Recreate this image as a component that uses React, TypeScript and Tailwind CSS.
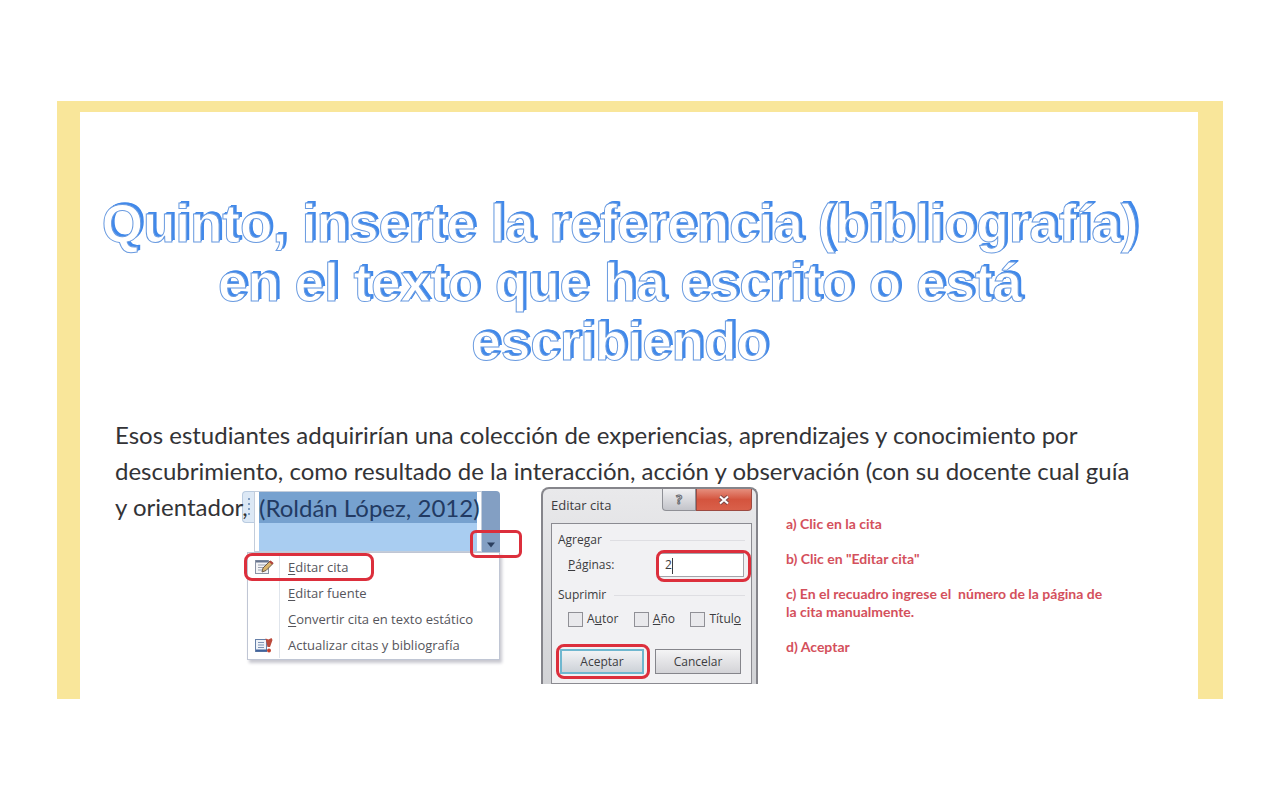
import React from 'react';

const MENU_ITEMS = [
  { key: 'E', rest: 'ditar cita', icon: 'edit' },
  { key: 'E', rest: 'ditar fuente', icon: '' },
  { key: 'C', rest: 'onvertir cita en texto estático', icon: '' },
  { key: '', rest: 'Actualizar citas y bibliografía', icon: 'update' },
];

const EditIcon = () => (
  <svg viewBox="0 0 20 16" className="w-5 h-4">
    <rect x="1.5" y="1.5" width="13" height="13" fill="#f4f4f6" stroke="#8a93a5" />
    <path d="M2 2.5h12" stroke="#66748f" strokeWidth="2" />
    <path d="M4 6h8M4 8.5h6M4 11h5" stroke="#9aa2b1" />
    <path d="M8 13l1-4 7-7 3 2.5-7 7z" fill="#d9b56c" stroke="#6b5a48" />
    <path d="M15 3l1.5-1.5L19.5 4 18 5.5z" fill="#b5443c" />
  </svg>
);

const UpdateIcon = () => (
  <svg viewBox="0 0 20 16" className="w-5 h-4">
    <rect x="1.5" y="2.5" width="11" height="12" fill="#eef2f8" stroke="#6680a8" />
    <path d="M2 13.5h11" stroke="#40639c" strokeWidth="2" />
    <path d="M4 5.5h6M4 8h6M4 10.5h6" stroke="#7f93b5" />
    <path d="M11.5 1.5l3 1 3-1.5 1 2-2.500 7h-2.500z" fill="#bb4a3c" />
    <circle cx="15" cy="13.5" r="2" fill="#c2412f" />
  </svg>
);

const CitationControl = () => (
  <div className="w-[258px] shrink-0 mt-0.5">
    <div className="relative z-10 flex h-[61px]">
      <div className="w-3 h-8 rounded-l border border-r-0 border-[#b9cbe0] bg-[#dce8f5] flex justify-center items-center">
        <svg viewBox="0 0 4 20" className="w-1 h-5">
          <path d="M2 1v18" stroke="#7f9dc2" strokeWidth="2" strokeDasharray="2 3" />
        </svg>
      </div>
      <div className="flex-1 min-w-0 border border-[#c3cddb] bg-white px-1">
        <div className="h-full bg-[#a9cdf1]">
          <div className="h-[31px] bg-[#76a1cf] text-2xl leading-[31px] text-[#223a62] whitespace-nowrap">
            (Roldán López, 2012)
          </div>
        </div>
      </div>
      <button aria-label="Opciones de cita" className="w-[18px] rounded-tr bg-[#839fc3] flex items-end justify-center pb-1">
        <svg viewBox="0 0 10 6" className="w-2.5 h-1.5">
          <path d="M1 0.5h8L5 5.5z" fill="#2c405f" />
        </svg>
      </button>
      <span className="absolute -right-[22px] -bottom-1.5 w-[52px] h-7 rounded-md border-3 border-[#dc2f3c]" />
    </div>
    <div className="relative ml-[5px] py-px bg-white border border-[#c0c6d4] shadow-[2px_3px_3px_#c8c8d0] font-['Open_Sans',sans-serif] text-[13px] text-[#55555c]">
      {MENU_ITEMS.map((item) => (
        <button key={item.rest} className="w-full h-[26px] flex items-center text-left whitespace-nowrap">
          <span className="w-8 h-full flex items-center justify-center border-r border-[#e0e5ec]">
            {item.icon === 'edit' && <EditIcon />}
            {item.icon === 'update' && <UpdateIcon />}
          </span>
          <span className="pl-2">
            <u className="underline-offset-2">{item.key}</u>
            {item.rest}
          </span>
        </button>
      ))}
      <span className="absolute -left-1 top-0 w-[130px] h-7 rounded-lg border-3 border-[#dc2f3c]" />
    </div>
  </div>
);

const GroupTitle = ({ children }: { children: React.ReactNode }) => (
  <div className="flex items-center gap-2 h-5">
    {children}
    <span className="flex-1 h-px bg-[#dedee2]" />
  </div>
);

const CheckOption = ({ children }: { children: React.ReactNode }) => (
  <label className="flex items-center gap-1">
    <input type="checkbox" className="appearance-none w-[15px] h-[15px] border border-[#909096] bg-[#e9e9ec]" />
    <span>{children}</span>
  </label>
);

const CiteDialog = () => (
  <div className="w-[217px] h-[197px] shrink-0 rounded-t-lg border-2 border-b-0 border-[#85858b] bg-linear-to-b from-[#e9e9eb] to-[#d2d3d6] pl-2 pr-1 font-['Open_Sans',sans-serif] text-xs text-[#3c3c40]">
    <div className="h-[34px] flex items-start justify-between">
      <span className="pt-2 text-[13px] leading-4">Editar cita</span>
      <div className="flex h-[22px]">
        <button aria-label="Ayuda" className="w-[34px] rounded-bl border border-t-0 border-[#8f9096] bg-linear-to-b from-[#f0f0f2] to-[#c3c4ca] font-bold text-[#f8f8f8] [-webkit-text-stroke:1px_#67686e]">
          ?
        </button>
        <button aria-label="Cerrar" className="w-14 rounded-br border border-t-0 border-[#9c4a41] bg-linear-to-b from-[#e58e7d] via-[#d4543e] to-[#d9604a] flex items-center justify-center">
          <svg viewBox="0 0 12 10" className="w-3 h-2.5">
            <path d="M2 1.5l8 7M10 1.5l-8 7" stroke="#7c4a48" strokeWidth="4" />
            <path d="M2 1.5l8 7M10 1.5l-8 7" stroke="#fff" strokeWidth="2" />
          </svg>
        </button>
      </div>
    </div>
    <form className="h-[161px] border border-[#8b8b91] bg-[#f1f1f3] px-1.5 pt-1.5" onSubmit={(e) => e.preventDefault()}>
      <GroupTitle>Agregar</GroupTitle>
      <div className="relative flex items-center h-[29px] pl-2.5">
        <label htmlFor="paginas" className="w-[90px]">
          <u>P</u>áginas:
        </label>
        <input id="paginas" defaultValue="2" className="w-[86px] h-6 bg-white border border-[#a4a4aa] pl-1.5 outline-none" />
        <span className="absolute left-[114px] top-2 w-px h-4 bg-[#3c3c40]" />
        <span className="absolute left-[98px] top-0 w-[95px] h-8 rounded-lg border-3 border-[#dc2f3c]" />
      </div>
      <div className="pt-1.5">
        <GroupTitle>Suprimir</GroupTitle>
      </div>
      <div className="flex items-center justify-between h-7 pl-2.5 pr-1">
        <CheckOption>A<u>u</u>tor</CheckOption>
        <CheckOption><u>A</u>ño</CheckOption>
        <CheckOption>Títul<u>o</u></CheckOption>
      </div>
      <div className="relative flex justify-between pt-4 pl-0.5 pr-1">
        <button type="submit" className="w-[84px] h-[25px] border-2 border-[#6fb7cf] bg-linear-to-b from-[#f2f3f5] to-[#cdd2d8]">
          Aceptar
        </button>
        <button type="button" className="w-[86px] h-[25px] border border-[#85858b] bg-linear-to-b from-[#f4f4f5] to-[#d3d3d7]">
          Cancelar
        </button>
        <span className="absolute -left-0.5 bottom-[-5px] w-[94px] h-[35px] rounded-lg border-3 border-[#dc2f3c]" />
      </div>
    </form>
  </div>
);

const App: React.FC = () => {
  return (
    <main className="min-h-screen bg-white flex items-center px-[57px] font-[Lato,sans-serif]">
      <section className="w-full bg-white border-t-[11px] border-l-[23px] border-r-[25px] border-[#f9e69a] pt-[82px] pb-[15px]">
        <h1 className="pr-[38px] text-center whitespace-nowrap font-['Liberation_Sans',sans-serif] font-bold text-[53px] leading-[59px] text-white [-webkit-text-stroke:1px_#6a9be0] [text-shadow:1px_-1px_0_#4189ea,2px_-2px_0_#4189ea,3px_-2px_0_#4189ea]">
          Quinto, inserte la referencia (bibliografía)
          <br />
          en el texto que ha escrito o está
          <br />
          escribiendo
        </h1>

        <div className="pl-[35px] mt-[46px] text-2xl leading-9 text-[#333336]">
          <p className="whitespace-nowrap leading-9">
            Esos estudiantes adquirirían una colección de experiencias, aprendizajes y conocimiento por
            <br />
            descubrimiento, como resultado de la interacción, acción y observación (con su docente cual guía
          </p>
          <div className="flex items-start">
            <p className="relative z-20 w-[127px] shrink-0 whitespace-nowrap leading-9">y orientador,</p>
            <CitationControl />
            <div className="ml-[41px] -mt-0.5">
              <CiteDialog />
            </div>
            <ol className="ml-7 mt-[26px] flex flex-col gap-[17px] font-bold text-sm leading-[18px] text-[#d4505c] whitespace-nowrap">
              <li className="leading-[18px]">a) Clic en la cita</li>
              <li className="leading-[18px]">b) Clic en "Editar cita"</li>
              <li className="leading-[18px]">
                c) En el recuadro ingrese el&nbsp; número de la página de
                <br />
                la cita manualmente.
              </li>
              <li className="leading-[18px]">d) Aceptar</li>
            </ol>
          </div>
        </div>
      </section>
    </main>
  );
};

export default App;
